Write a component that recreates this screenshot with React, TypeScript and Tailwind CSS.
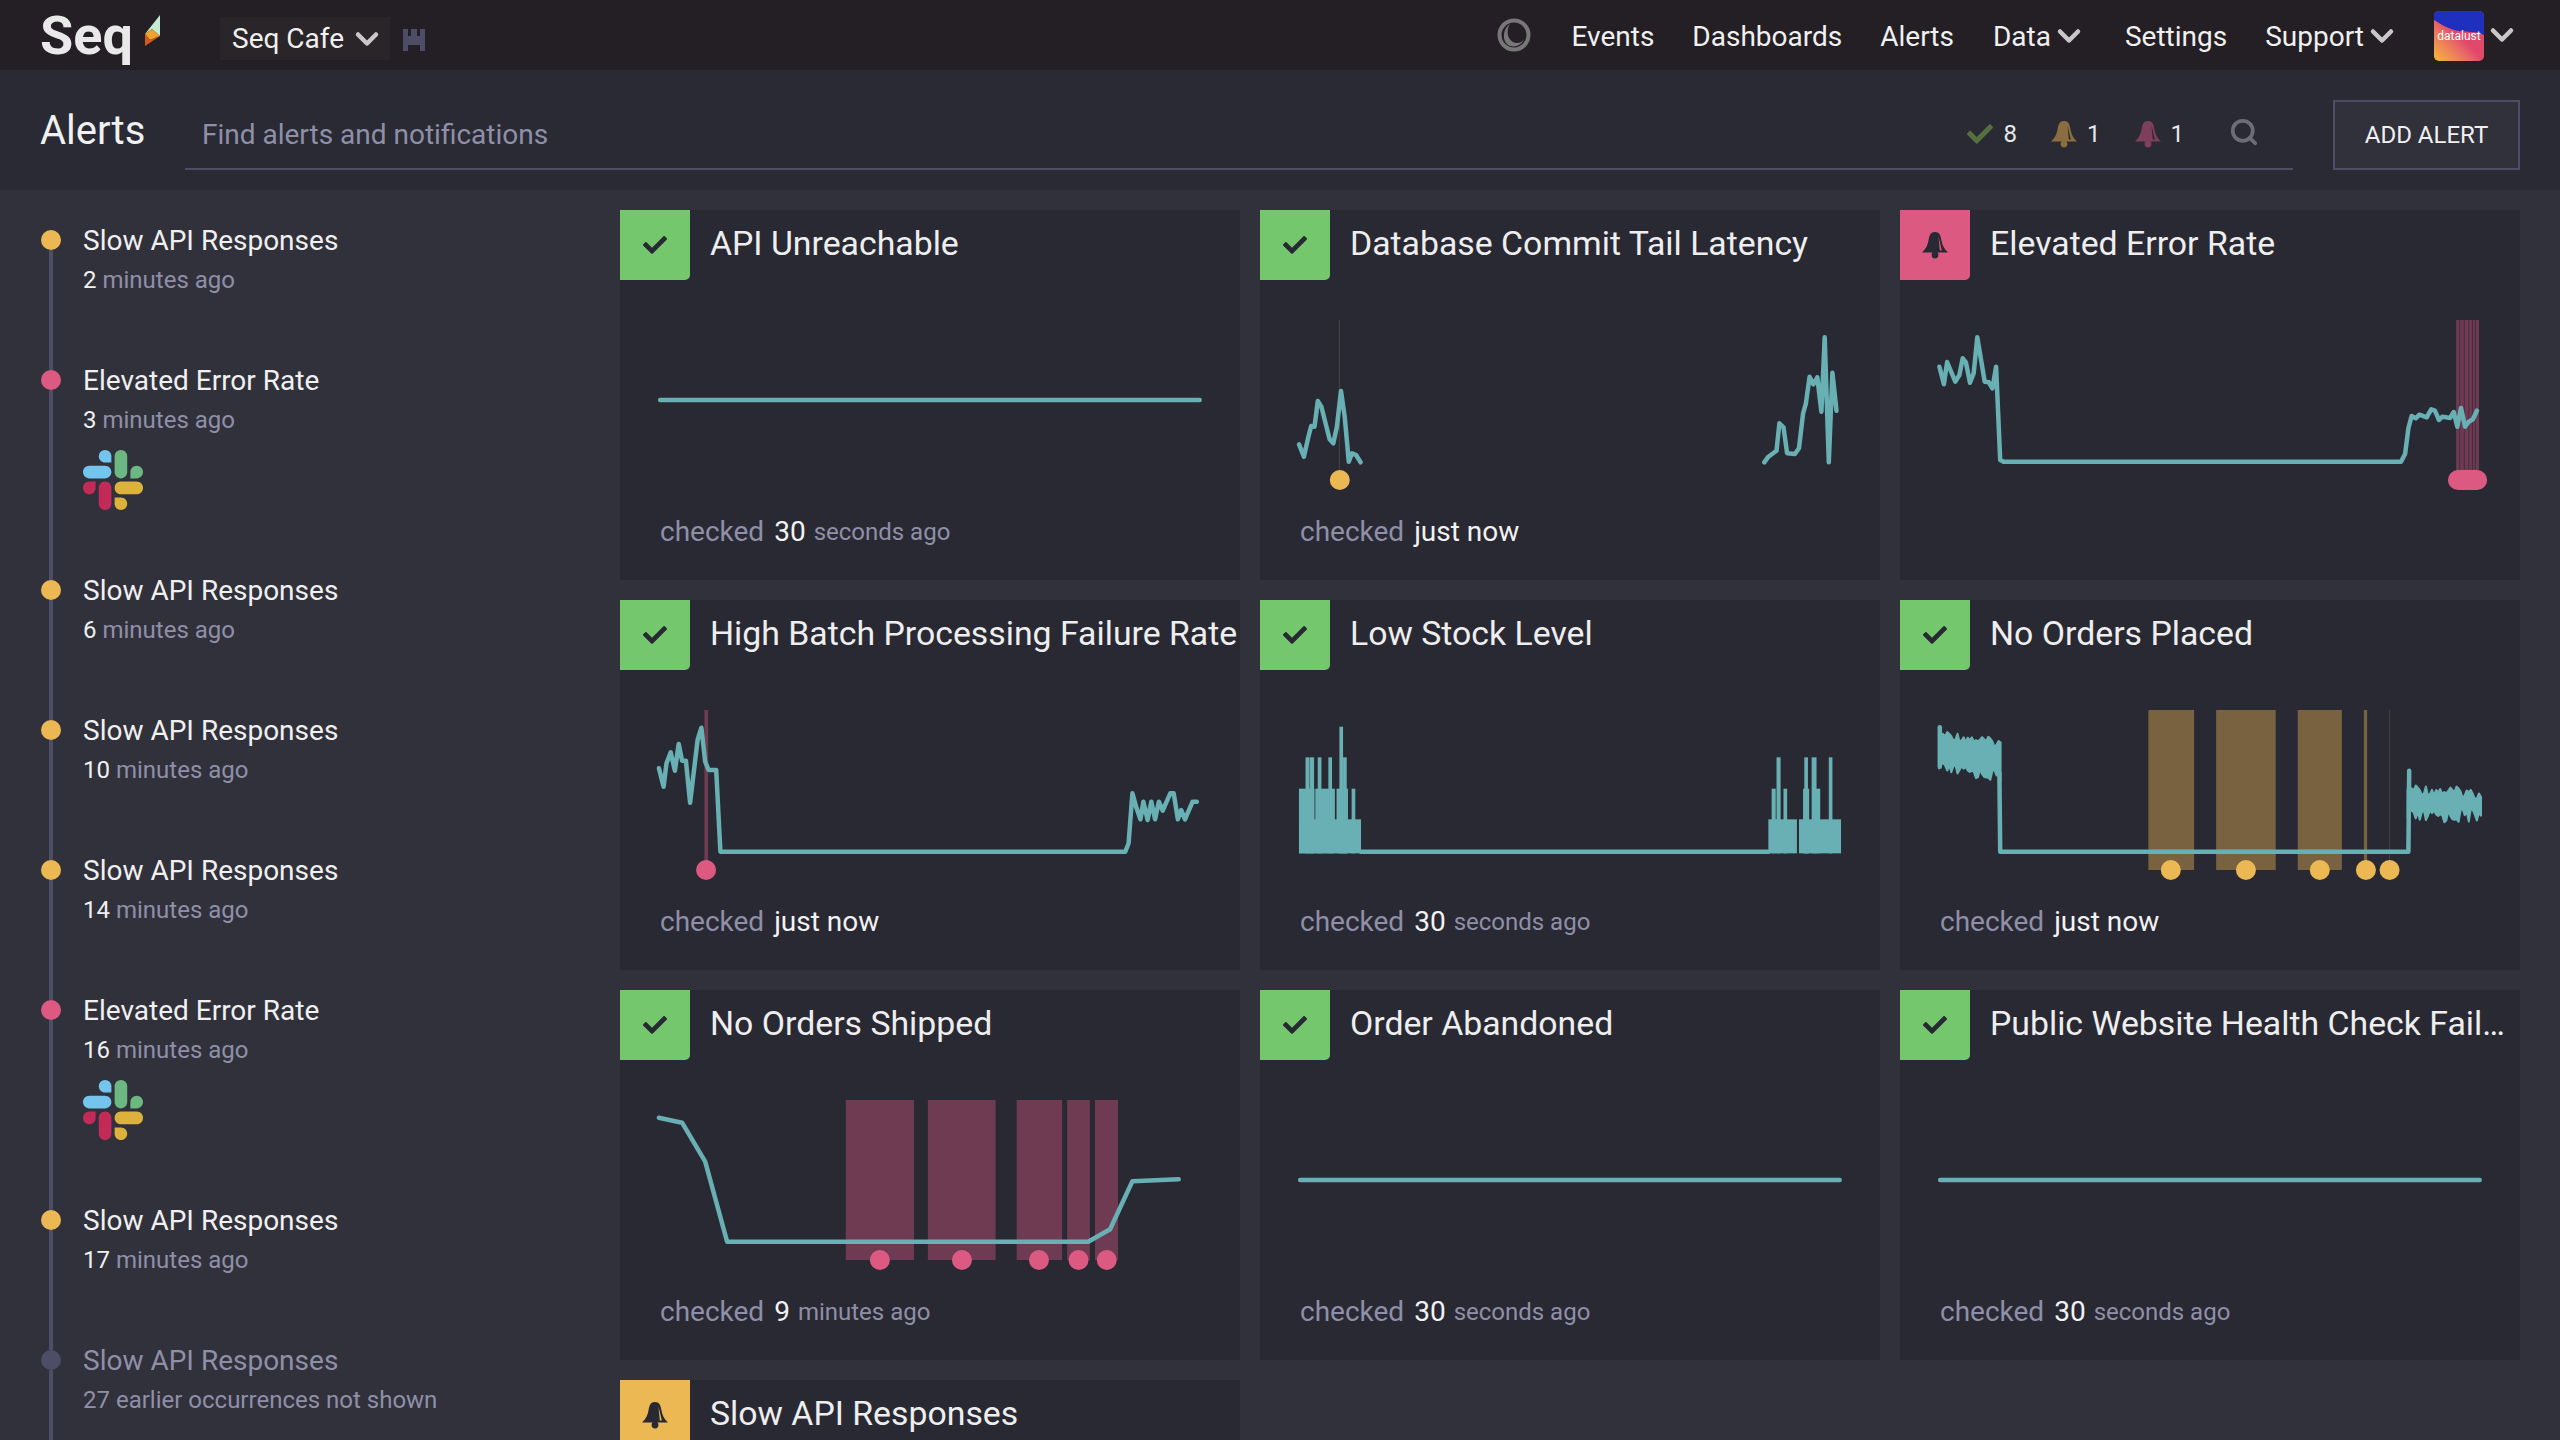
import { FaCheck } from "react-icons/fa";
import { ChevronDown, Search } from "lucide-react";

type Pt = [number, number];
type Frame = { sx: number; ox: number; oy: number };

// the traces below were read off at these per-column scales
const COL1: Frame = { sx: 2.376, ox: -20, oy: 0 };
const COL2: Frame = { sx: 2.45, ox: -10, oy: 0 };

const LINE = "#68b0b3";
const AMBER = "#ebb853";
const PINK = "#dc5a82";
const AMBER_BAND = "#78623f";
const PINK_BAND = "#6e3b52";

const lx = (x: number, f: Frame) => x / f.sx + f.ox;
const ly = (y: number, f: Frame) => y / 3 + f.oy;
const toPoints = (pts: Pt[], f: Frame) =>
  pts.map(([x, y]) => `${lx(x, f).toFixed(1)},${ly(y, f).toFixed(1)}`).join(" ");

// cheap repeatable noise so the band looks jagged but never changes between renders
const jitter = (i: number) => {
  const v = Math.sin(i * 12.9898) * 43758.5453;
  return (v - Math.floor(v)) * 2 - 1;
};

// noisy filled band used for the "No Orders Placed" chart
function noiseBand(x1: number, x2: number, t1: number, t2: number, b1: number, b2: number, amp: number): Pt[] {
  const top: Pt[] = [];
  const bottom: Pt[] = [];
  const steps = Math.round((x2 - x1) / 5);
  for (let i = 0; i <= steps; i++) {
    const p = i / steps;
    const x = x1 + (x2 - x1) * p;
    top.push([x, t1 + (t2 - t1) * p + jitter(i + 3) * amp]);
    bottom.push([x, b1 + (b2 - b1) * p + jitter(i + 71) * amp * 1.3]);
  }
  return [...top, ...bottom.reverse()];
}

function Trace({ pts, f }: { pts: Pt[]; f: Frame }) {
  return (
    <polyline
      points={toPoints(pts, f)}
      fill="none"
      stroke={LINE}
      strokeWidth={4.5}
      strokeLinecap="round"
      strokeLinejoin="round"
    />
  );
}

function Band({ x1, x2, top, bottom, fill, f }: { x1: number; x2: number; top: number; bottom: number; fill: string; f: Frame }) {
  return (
    <rect
      x={lx(x1, f)}
      y={ly(top, f)}
      width={(x2 - x1) / f.sx}
      height={(bottom - top) / 3}
      fill={fill}
    />
  );
}

function FlatChart() {
  return <Trace pts={[[143, 570], [1425, 570]]} f={COL1} />;
}

function CommitChart() {
  const f = { ...COL2, oy: -10 };
  return (
    <>
      <line x1={lx(219, f)} x2={lx(219, f)} y1={110} y2={270} stroke="#48423f" strokeWidth={1} />
      <Trace
        f={f}
        pts={[[120, 733], [132, 770], [143, 710], [150, 678], [158, 680], [166, 603], [175, 620], [195, 718], [204, 730], [213, 680], [223, 573], [232, 650], [242, 785], [250, 760], [260, 765], [271, 787]]}
      />
      <Trace
        f={f}
        pts={[[1260, 787], [1270, 770], [1290, 752], [1297, 670], [1307, 682], [1316, 760], [1335, 762], [1345, 745], [1355, 640], [1362, 610], [1371, 530], [1380, 553], [1390, 532], [1400, 635], [1408, 412], [1418, 787], [1427, 518], [1437, 632]]}
      />
      <circle cx={lx(220, f)} cy={270} r={10} fill={AMBER} />
    </>
  );
}

function ErrorRateChart() {
  const f = { ...COL2, oy: -10 };
  return (
    <>
      <Band x1={1387} x2={1443} top={360} bottom={820} fill={PINK_BAND} f={f} />
      {[1396, 1407, 1418, 1427, 1434].map((x) => (
        <line key={x} x1={lx(x, f)} x2={lx(x, f)} y1={110} y2={265} stroke="#292933" strokeWidth={1} opacity={0.6} />
      ))}
      <Trace
        f={f}
        pts={[[121, 500], [132, 553], [140, 486], [160, 545], [170, 525], [178, 475], [186, 487], [196, 548], [205, 520], [214, 412], [232, 545], [242, 547], [251, 565], [260, 500], [270, 780], [278, 785], [1252, 785], [1262, 762], [1270, 685], [1278, 648], [1288, 655], [1297, 644], [1315, 652], [1326, 628], [1335, 632], [1345, 660], [1353, 650], [1362, 652], [1372, 654], [1381, 636], [1390, 680], [1399, 624], [1409, 680], [1418, 665], [1428, 658], [1438, 632]]}
      />
      <rect x={lx(1367, f)} y={260} width={96 / 2.45} height={20} rx={10} fill={PINK} />
    </>
  );
}

function BatchChart() {
  return (
    <>
      <Band x1={248} x2={257} top={330} bottom={790} fill={PINK_BAND} f={COL1} />
      <Trace
        f={COL1}
        pts={[[140, 505], [151, 560], [158, 490], [168, 457], [178, 512], [187, 432], [195, 482], [204, 482], [214, 608], [232, 420], [241, 383], [250, 485], [258, 510], [276, 510], [286, 755], [1248, 755], [1256, 730], [1265, 580], [1275, 625], [1284, 658], [1291, 605], [1301, 660], [1310, 605], [1319, 658], [1328, 605], [1337, 632], [1355, 580], [1363, 580], [1373, 658], [1381, 630], [1390, 658], [1408, 605], [1418, 605]]}
      />
      <circle cx={lx(252, COL1)} cy={270} r={10} fill={PINK} />
    </>
  );
}

function StockChart() {
  const bars: [number, number, number][] = [
    [120, 272, 658], [120, 158, 566], [136, 146, 472], [147, 157, 472], [166, 175, 472], [160, 208, 566],
    [192, 201, 472], [212, 240, 566], [228, 237, 472], [219, 228, 380], [249, 258, 566],
    [1270, 1340, 658], [1278, 1288, 566], [1290, 1300, 472], [1307, 1316, 566], [1345, 1448, 658],
    [1355, 1370, 566], [1358, 1367, 472], [1376, 1388, 472], [1385, 1397, 566], [1418, 1427, 472],
  ];
  return (
    <>
      {bars.map(([x1, x2, top], i) => (
        <Band key={i} x1={x1} x2={x2} top={top} bottom={760} fill={LINE} f={COL2} />
      ))}
      <Trace pts={[[272, 755], [1270, 755]]} f={COL2} />
    </>
  );
}

function OrdersPlacedChart() {
  const bands: [number, number][] = [[633, 745], [799, 945], [999, 1107], [1161, 1169]];
  return (
    <>
      {bands.map(([x1, x2]) => (
        <Band key={x1} x1={x1} x2={x2} top={330} bottom={810} fill={AMBER_BAND} f={COL2} />
      ))}
      <line x1={lx(1224, COL2)} x2={lx(1224, COL2)} y1={110} y2={270} stroke="#48423f" strokeWidth={1} />
      <polygon
        points={toPoints(noiseBand(120, 271, 402, 430, 505, 528, 14), COL2)}
        fill={LINE}
        stroke={LINE}
        strokeWidth={2}
        strokeLinejoin="round"
      />
      <polygon
        points={toPoints(noiseBand(1268, 1448, 566, 582, 652, 644, 17), COL2)}
        fill={LINE}
        stroke={LINE}
        strokeWidth={2}
        strokeLinejoin="round"
      />
      <Trace pts={[[122, 382], [122, 500]]} f={COL2} />
      <Trace pts={[[268, 520], [270, 755], [1270, 755], [1272, 512]]} f={COL2} />
      {[688, 872, 1053, 1166, 1224].map((x) => (
        <circle key={x} cx={lx(x, COL2)} cy={270} r={10} fill={AMBER} />
      ))}
    </>
  );
}

function OrdersShippedChart() {
  const f = { ...COL1, oy: -10 };
  const bands: [number, number][] = [[584, 746], [779, 940], [990, 1098], [1110, 1164], [1176, 1231]];
  return (
    <>
      {bands.map(([x1, x2]) => (
        <Band key={x1} x1={x1} x2={x2} top={360} bottom={840} fill={PINK_BAND} f={f} />
      ))}
      <Trace f={f} pts={[[140, 413], [195, 428], [250, 545], [302, 785], [1160, 785], [1212, 748], [1265, 604], [1375, 598]]} />
      {[665, 860, 1043, 1137, 1204].map((x) => (
        <circle key={x} cx={lx(x, f)} cy={270} r={10} fill={PINK} />
      ))}
    </>
  );
}

function Bell({ className }: { className: string }) {
  return (
    <svg viewBox="0 0 26 27" className={className} fill="currentColor">
      <path
        fillRule="evenodd"
        d="M13 0C8.500 0 7.500 3 6.600 8 5.800 13 4 17 0 20.500h26C22 17 20.200 13 19.400 8 18.500 3 17.500 0 13 0ZM16.500 4.500 19.800 18.500 17.800 18.500Z"
      />
      <circle cx={13} cy={23} r={3.4} />
    </svg>
  );
}

function SlackLogo() {
  return (
    <svg viewBox="0 0 122.8 122.8" className="h-[60px] w-[60px]">
      <path d="M25.8 77.6c0 7.1-5.8 12.9-12.9 12.9S0 84.7 0 77.6s5.8-12.9 12.9-12.9h12.9v12.9z" fill="#c22a58" />
      <path d="M32.3 77.6c0-7.1 5.8-12.9 12.9-12.9s12.9 5.8 12.9 12.9v32.3c0 7.1-5.8 12.9-12.9 12.9s-12.9-5.8-12.9-12.9V77.6z" fill="#c22a58" />
      <path d="M45.2 25.8c-7.1 0-12.9-5.8-12.9-12.9S38.1 0 45.2 0s12.9 5.8 12.9 12.9v12.9H45.2z" fill="#74c5ee" />
      <path d="M45.2 32.3c7.1 0 12.9 5.8 12.9 12.9s-5.8 12.9-12.9 12.9H12.9C5.8 58.1 0 52.3 0 45.2s5.8-12.9 12.9-12.9h32.3z" fill="#74c5ee" />
      <path d="M97 45.2c0-7.1 5.8-12.9 12.9-12.9s12.9 5.8 12.9 12.9-5.8 12.9-12.9 12.9H97V45.2z" fill="#6cb880" />
      <path d="M90.5 45.2c0 7.1-5.8 12.9-12.9 12.9s-12.9-5.8-12.9-12.9V12.9C64.7 5.8 70.5 0 77.6 0s12.9 5.8 12.9 12.9v32.3z" fill="#6cb880" />
      <path d="M77.6 97c7.1 0 12.9 5.8 12.9 12.9s-5.8 12.9-12.9 12.9-12.9-5.8-12.9-12.9V97h12.9z" fill="#dcb23d" />
      <path d="M77.6 90.5c-7.1 0-12.9-5.8-12.9-12.9s5.8-12.9 12.9-12.9h32.3c7.1 0 12.9 5.8 12.9 12.9s-5.8 12.9-12.9 12.9H77.6z" fill="#dcb23d" />
    </svg>
  );
}

type Status = "ok" | "warn" | "error";

const BADGES: Record<Status, string> = {
  ok: "bg-[#74c76d]",
  warn: "bg-[#ebb853]",
  error: "bg-[#dc5a82]",
};

type Alert = {
  title: string;
  status: Status;
  chart?: React.ReactNode;
  num?: string;
  unit: string;
};

const alerts: Alert[] = [
  { title: "API Unreachable", status: "ok", chart: <FlatChart />, num: "30", unit: "seconds ago" },
  { title: "Database Commit Tail Latency", status: "ok", chart: <CommitChart />, unit: "just now" },
  { title: "Elevated Error Rate", status: "error", chart: <ErrorRateChart />, unit: "" },
  { title: "High Batch Processing Failure Rate", status: "ok", chart: <BatchChart />, unit: "just now" },
  { title: "Low Stock Level", status: "ok", chart: <StockChart />, num: "30", unit: "seconds ago" },
  { title: "No Orders Placed", status: "ok", chart: <OrdersPlacedChart />, unit: "just now" },
  { title: "No Orders Shipped", status: "ok", chart: <OrdersShippedChart />, num: "9", unit: "minutes ago" },
  { title: "Order Abandoned", status: "ok", chart: <FlatChart />, num: "30", unit: "seconds ago" },
  { title: "Public Website Health Check Failures", status: "ok", chart: <FlatChart />, num: "30", unit: "seconds ago" },
  { title: "Slow API Responses", status: "warn", unit: "" },
];

type Occurrence = {
  title: string;
  num?: string;
  sub: string;
  color: string;
  slack?: boolean;
  faded?: boolean;
};

const occurrences: Occurrence[] = [
  { title: "Slow API Responses", num: "2", sub: "minutes ago", color: "bg-[#ebb853]" },
  { title: "Elevated Error Rate", num: "3", sub: "minutes ago", color: "bg-[#dc5a82]", slack: true },
  { title: "Slow API Responses", num: "6", sub: "minutes ago", color: "bg-[#ebb853]" },
  { title: "Slow API Responses", num: "10", sub: "minutes ago", color: "bg-[#ebb853]" },
  { title: "Slow API Responses", num: "14", sub: "minutes ago", color: "bg-[#ebb853]" },
  { title: "Elevated Error Rate", num: "16", sub: "minutes ago", color: "bg-[#dc5a82]", slack: true },
  { title: "Slow API Responses", num: "17", sub: "minutes ago", color: "bg-[#ebb853]" },
  { title: "Slow API Responses", sub: "27 earlier occurrences not shown", color: "bg-[#4d4d66]", faded: true },
];

function AlertCard({ alert }: { alert: Alert }) {
  return (
    <div className="flex h-[370px] min-w-0 flex-col bg-[#292933]">
      <div className="flex h-[70px] shrink-0 items-center">
        <div className={`flex h-[70px] w-[70px] shrink-0 items-center justify-center rounded-br-[5px] text-[#292933] ${BADGES[alert.status]}`}>
          {alert.status === "ok" ? <FaCheck className="h-6 w-6" /> : <Bell className="h-[27px] w-[26px]" />}
        </div>
        <div className="min-w-0 flex-1 truncate pb-[2px] pl-5 text-[33.8px] text-[#eeeeee]">{alert.title}</div>
      </div>
      <svg viewBox="0 70 620 220" className="block h-[220px] w-full shrink-0">
        {alert.chart}
      </svg>
      {alert.unit && (
        <div className="flex h-[60px] items-center pt-[3px] pl-10 text-[28px]">
          <span className="text-[#8f8fa8]">checked</span>
          {alert.num ? (
            <>
              <span className="ml-[10px] text-[#f2f2f2]">{alert.num}</span>
              <span className="ml-2 text-[24px] text-[#8f8fa8]">{alert.unit}</span>
            </>
          ) : (
            <span className="ml-[10px] text-[#f2f2f2]">{alert.unit}</span>
          )}
        </div>
      )}
    </div>
  );
}

function TimelineItem({ item }: { item: Occurrence }) {
  return (
    <div className={`flex ${item.slack ? "h-[210px]" : "h-[140px]"}`}>
      <div className="flex w-5 shrink-0 flex-col items-center">
        <div className={`h-5 w-5 rounded-full ${item.color}`}></div>
        <div className="w-1 flex-1 bg-[#4d4d66]"></div>
      </div>
      <div className="ml-[22px]">
        <div className={`pt-[1px] text-[28px] leading-5 ${item.faded ? "text-[#8f8fa8]" : "text-[#f0f0f0]"}`}>{item.title}</div>
        <div className="mt-[19px] text-[24px] leading-5 text-[#8f8fa8]">
          {item.num && <span className="text-[#f0f0f0]">{item.num} </span>}
          {item.sub}
        </div>
        {item.slack && (
          <div className="mt-5">
            <SlackLogo />
          </div>
        )}
      </div>
    </div>
  );
}

function NavLink({ label, menu, className }: { label: string; menu?: boolean; className?: string }) {
  return (
    <div className={`mt-1 flex items-center text-[28px] text-[#f0f0f0] ${className ?? ""}`}>
      {label}
      {menu && <ChevronDown className="-mt-[3px] h-9 w-9 text-[#c8c8c8]" strokeWidth={3} />}
    </div>
  );
}

export default function App() {
  return (
    <div className="flex h-screen flex-col overflow-hidden bg-[#31313b] font-[Roboto,sans-serif]">
      {/* Top nav */}
      <div className="flex h-[70px] shrink-0 items-center bg-[#231f24]">
        <div className="mt-[2px] ml-10 w-[105px] text-[54px] leading-none font-bold text-[#e9e9e9]">Seq</div>
        <svg viewBox="0 0 15 31" className="mb-[10px] h-[31px] w-[15px]">
          <polygon points="15,0 0,19 7,14 15,21" fill="#c6ebd3" />
          <polygon points="0,19 7,14 15,21 5,25" fill="#eda32e" />
          <polygon points="0,31 0,19 5,25 15,21" fill="#d2591a" />
        </svg>
        <div className="mt-[7px] ml-[60px] flex h-[43px] w-[170px] items-center bg-[#2a2529] pl-3 text-[28px] text-[#f0f0f0]">
          Seq Cafe
          <ChevronDown className="ml-[5px] h-9 w-9 text-[#c8c8c8]" strokeWidth={3} />
        </div>
        <svg viewBox="0 0 22 22" className="mt-[10px] ml-[13px] h-[22px] w-[22px]" fill="#4d4d66">
          <path d="M0 0h5v7h3V0h6v7h3V0h5v22h-5v-6H5v6H0z" />
        </svg>

        <div className="flex-1"></div>

        <svg viewBox="0 0 34 34" className="h-[34px] w-[34px]" fill="none">
          <circle cx={17} cy={17} r={14.5} stroke="#777777" strokeWidth={4} />
          <path d="M13 6c-4 6-3 15 3 18 4 2 9 1 11-3-3 8-13 10-18 4C5 19 7 10 13 6Z" fill="#777777" />
        </svg>
        <NavLink label="Events" className="ml-10" />
        <NavLink label="Dashboards" className="ml-[38px]" />
        <NavLink label="Alerts" className="ml-[38px]" />
        <NavLink label="Data" menu className="ml-[39px]" />
        <NavLink label="Settings" className="ml-[38px]" />
        <NavLink label="Support" menu className="ml-[38px]" />
        <div className="relative mt-[2px] ml-[34px] flex h-[50px] w-[50px] items-center justify-center overflow-hidden rounded-[5px] bg-linear-to-tr from-[#f5b82c] via-[#e2486c] to-[#d84f66]">
          <svg viewBox="0 0 50 50" className="absolute inset-0 h-full w-full">
            <path d="M0 0h50v24C42 20 34 21 25 20 15 18 8 14 0 9Z" fill="#1f30bf" />
          </svg>
          <span className="relative text-[12px] text-white">datalust</span>
        </div>
        <ChevronDown className="mr-10 h-9 w-9 text-[#c8c8c8]" strokeWidth={3} />
      </div>

      {/* Sub header */}
      <div className="flex h-[120px] shrink-0 items-center bg-[#292a33] pt-[10px] pr-10 pl-10">
        <div className="w-[145px] shrink-0 pb-[8px] text-[40px] text-[#f0f0f0]">Alerts</div>
        <div className="flex h-[70px] flex-1 items-center border-b-2 border-[#4d4d66] pl-[17px]">
          <div className="flex-1 pt-[2px] text-[28px] text-[#8f8fa8]">Find alerts and notifications</div>
          <FaCheck className="h-[26px] w-[26px] text-[#556f3f]" />
          <span className="ml-[11px] text-[24px] text-[#e8e8e8]">8</span>
          <Bell className="ml-[34px] h-[27px] w-[26px] text-[#8b6e40]" />
          <span className="ml-[10px] text-[24px] text-[#e8e8e8]">1</span>
          <Bell className="ml-[34px] h-[27px] w-[26px] text-[#7e3f5c]" />
          <span className="ml-[10px] text-[24px] text-[#e8e8e8]">1</span>
          <Search className="mr-[34px] mb-[5px] ml-[45px] h-[30px] w-[30px] text-[#6d6d78]" strokeWidth={3} />
        </div>
        <div className="ml-10 flex h-[70px] w-[187px] shrink-0 items-center justify-center border-2 border-[#4d4d66] bg-[#31313b] text-[24px] text-[#f0f0f0]">
          ADD ALERT
        </div>
      </div>

      {/* Body */}
      <div className="flex min-h-0 flex-1">
        <div className="w-[620px] shrink-0 pt-10 pl-[41px]">
          {occurrences.map((item, i) => (
            <TimelineItem key={i} item={item} />
          ))}
        </div>
        <div className="grid grid-cols-[repeat(3,620px)] content-start gap-5 pt-5">
          {alerts.map((alert) => (
            <AlertCard key={alert.title} alert={alert} />
          ))}
        </div>
      </div>
    </div>
  );
}
